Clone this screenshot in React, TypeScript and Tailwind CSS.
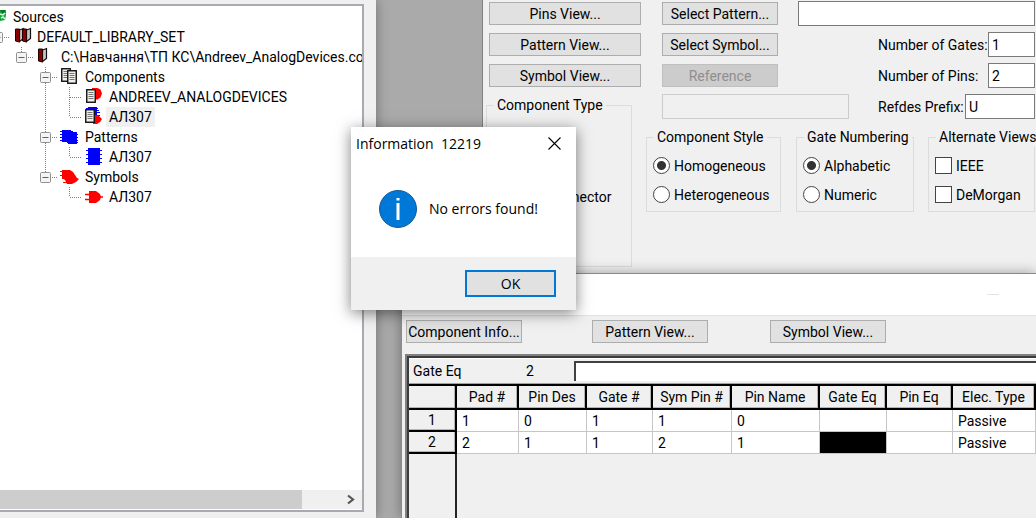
import React from "react";

type Guide = "none" | "line" | "tee" | "end" | "box" | "boxEnd";
type IconName = "sources" | "set" | "library" | "components" | "symbolPart" | "fullPart" | "patterns" | "pattern" | "symbols" | "symbol";

interface Node {
  label: string;
  icon: IconName;
  guides: Guide[];
  selected?: boolean;
}

const NODES: Node[] = [
  { label: "Sources", icon: "sources", guides: [] },
  { label: "DEFAULT_LIBRARY_SET", icon: "set", guides: ["boxEnd"] },
  { label: "C:\\Навчання\\ТП КС\\Andreev_AnalogDevices.co", icon: "library", guides: ["none", "boxEnd"] },
  { label: "Components", icon: "components", guides: ["none", "none", "box"] },
  { label: "ANDREEV_ANALOGDEVICES", icon: "symbolPart", guides: ["none", "none", "line", "tee"] },
  { label: "АЛ307", icon: "fullPart", guides: ["none", "none", "line", "end"], selected: true },
  { label: "Patterns", icon: "patterns", guides: ["none", "none", "box"] },
  { label: "АЛ307", icon: "pattern", guides: ["none", "none", "line", "end"] },
  { label: "Symbols", icon: "symbols", guides: ["none", "none", "boxEnd"] },
  { label: "АЛ307", icon: "symbol", guides: ["none", "none", "none", "end"] },
];

function GuideCell({ kind }: { kind: Guide }) {
  const boxed = kind === "box" || kind === "boxEnd";
  const through = kind === "box" || kind === "line" || kind === "tee";
  return (
    <svg width="24" height="20" viewBox="0 0 24 20" className="shrink-0" aria-hidden="true">
      {kind !== "none" && (
        <path d={through ? "M11.5 0V20" : "M11.5 0V10"} stroke="#808080" strokeDasharray="1 1" />
      )}
      {kind !== "none" && kind !== "line" && <path d="M12 10.5H25" stroke="#808080" strokeDasharray="1 1" />}
      {boxed && (
        <>
          <rect x="6.5" y="5.5" width="10" height="10" rx="1" fill="#f4f4f4" stroke="#919191" />
          <path d="M8.5 10.5H14.5" stroke="#4060b0" />
        </>
      )}
    </svg>
  );
}

const doc = (x: number, y: number) => (
  <g key={x}>
    <rect x={x + 0.75} y={y + 0.75} width="8.5" height="12.5" fill="#f0f0ec" stroke="#111" strokeWidth="1.4" />
    <path d={`M${x + 2.5} ${y + 3.5}h5M${x + 2.5} ${y + 5.5}h5M${x + 2.5} ${y + 7.5}h5M${x + 2.5} ${y + 9.5}h5`} stroke="#555" strokeWidth="0.8" />
  </g>
);

const book = (x: number, y: number) => (
  <g key={x}>
    <path d={`M${x + 4.5} ${y + 2}l4-1.500v10l-4 3z`} fill="#c4c4c4" stroke="#111" strokeWidth="1.2" />
    <path d={`M${x + 0.5} ${y + 1}h4v13l-4-1z`} fill="#8b0000" stroke="#200" strokeWidth="1" />
  </g>
);

function NodeIcon({ name }: { name: IconName }) {
  const art: Record<IconName, React.ReactNode> = {
    sources: (
      <>
        <path d="M8 3h12v5l-1 5-5 1-6-2z" fill="#12a53a" />
        <path d="M14 3h5v3h-3z" fill="#067a22" />
        <path d="M14 7l3 1 2-2M15 11l2-1 2 2" stroke="#d8ffe0" strokeWidth="1.500" fill="none" />
      </>
    ),
    set: <>{book(5, 1)}{book(12, 1)}</>,
    library: book(4, 1),
    components: <>{doc(3, 1)}{doc(9, 3)}</>,
    symbolPart: (
      <>
        <path d="M10 1h5.500l3 1.500 1.500 4-1.500 4-3 2H10z" fill="#f00" />
        {doc(4, 2)}
      </>
    ),
    fullPart: (
      <>
        <path d="M4 1.500h12M4 3.500h13M14 5.500h4M14 8.500h4" stroke="#00f" />
        <path d="M6 0h9v10H6z" fill="#00f" />
        <path d="M11 8h5l2 2 2 2-2 3-3 2h-4z" fill="#f00" />
        {doc(3, 2)}
      </>
    ),
    patterns: (
      <>
        <path d="M4 3h9v12H4zM10 5h9v12h-9z" fill="#00f" />
        <path d="M2 4.500h13M2 7.500h18M2 10.500h18M2 13.500h18M9 15.500h11" stroke="#00f" />
      </>
    ),
    pattern: (
      <>
        <path d="M6 1h12v17H6z" fill="#00f" />
        <path d="M4 3.500h16M4 7.500h16M4 11.500h16M4 15.500h16" stroke="#00f" strokeWidth="1.200" />
      </>
    ),
    symbols: (
      <>
        <path d="M4 3h8l3 2 2 3 2 3 2 1-3 3-4 2H9l-2-4-3-2z" fill="#f00" />
        <path d="M2 4.500h4M2 8.500h4M4 11.500h6M5 15.500h6" stroke="#f00" />
      </>
    ),
    symbol: (
      <>
        <path d="M7 4h7l4 3 1 3-1 3-4 3H7z" fill="#f00" />
        <path d="M3 7.500h5M3 12.500h5M17 10h4" stroke="#f00" strokeWidth="1.300" />
      </>
    ),
  };
  return (
    <svg width="24" height="20" viewBox="0 0 24 20" className="shrink-0" aria-hidden="true">
      {art[name]}
    </svg>
  );
}

function SourceTree() {
  return (
    <ul className="-ml-[14px] pt-px">
      {NODES.map((node, i) => (
        <li key={i} className="flex h-5 items-center whitespace-nowrap">
          {node.guides.map((g, j) => (
            <GuideCell key={j} kind={g} />
          ))}
          <NodeIcon name={node.icon} />
          <span className={node.selected ? "bg-[#f0f0f0] px-[3px] leading-5" : "pl-[3px] leading-5"}>{node.label}</span>
        </li>
      ))}
    </ul>
  );
}

function Button({ children, className = "", disabled }: { children: React.ReactNode; className?: string; disabled?: boolean }) {
  return (
    <button
      type="button"
      disabled={disabled}
      className={`h-[23px] whitespace-nowrap border border-[#adadad] bg-[#e1e1e1] leading-5 disabled:border-[#bfbfbf] disabled:bg-[#cccccc] disabled:text-[#8f8f8f] ${className}`}
    >
      {children}
    </button>
  );
}

function Field({ id, label, value, width }: { id: string; label: string; value: string; width: string }) {
  return (
    <>
      <label htmlFor={id} className="whitespace-nowrap leading-5">{label}</label>
      <input id={id} defaultValue={value} className={`ml-auto h-[25px] border border-[#7a7a7a] bg-white px-[3px] ${width}`} />
    </>
  );
}

function Choice({ type, name, label, checked }: { type: "radio" | "checkbox"; name: string; label: string; checked?: boolean }) {
  return (
    <label className="flex h-[29px] items-center gap-1">
      <input
        type={type}
        name={name}
        defaultChecked={checked}
        className={
          type === "radio"
            ? "size-[17px] shrink-0 appearance-none rounded-full border border-[#444] bg-white checked:bg-[radial-gradient(circle,#333_4px,#fff_5px)]"
            : "size-[17px] shrink-0 appearance-none border border-[#444] bg-white"
        }
      />
      {label}
    </label>
  );
}

function Group({ title, className = "", children }: { title: string; className?: string; children: React.ReactNode }) {
  return (
    <fieldset className={`min-w-0 border border-[#dcdcdc] px-[6px] ${className}`}>
      <legend className="ml-px whitespace-nowrap px-[3px] leading-5">{title}</legend>
      {children}
    </fieldset>
  );
}

function ComponentWindow() {
  return (
    <main className="flex min-w-0 flex-1 items-start border-l border-[#808080] bg-[#f0f0f0] pl-[3px] pr-px pt-px">
      <div className="w-[146px] shrink-0">
        <div className="ml-[3px] flex w-[152px] flex-col gap-2 pt-px">
          <Button>Pins View...</Button>
          <Button>Pattern View...</Button>
          <Button>Symbol View...</Button>
        </div>
        <Group title="Component Type" className="mt-2 h-[172px]">
          <div className="ml-[33px] mt-[67px]">
            <Choice type="radio" name="type" label="Connector" />
          </div>
        </Group>
      </div>
      <div className="ml-[14px] min-w-0 flex-1">
        <div className="ml-4 flex flex-col gap-[6px]">
          <div className="flex items-center justify-between">
            <Button className="w-[116px]">Select Pattern...</Button>
            <input aria-label="Component name" className="h-[25px] w-[237px] border border-[#7a7a7a] bg-white px-[3px]" />
          </div>
          <div className="flex items-center justify-between">
            <Button className="w-[116px]">Select Symbol...</Button>
            <div className="flex w-[157px] items-center">
              <Field id="gates" label="Number of Gates:" value="1" width="w-[47px]" />
            </div>
          </div>
          <div className="flex items-center justify-between">
            <Button className="w-[116px]" disabled>Reference</Button>
            <div className="flex w-[157px] items-center">
              <Field id="pins" label="Number of Pins:" value="2" width="w-[47px]" />
            </div>
          </div>
          <div className="flex items-center justify-between">
            <input aria-label="Reference name" disabled className="h-[25px] w-[187px] border border-[#cccccc] bg-[#f0f0f0]" />
            <div className="flex w-[157px] items-center">
              <Field id="prefix" label="Refdes Prefix:" value="U" width="w-[70px]" />
            </div>
          </div>
        </div>
        <div className="mt-2 flex">
          <Group title="Component Style" className="h-[85px] w-[135px]">
            <div className="pt-1">
              <Choice type="radio" name="style" label="Homogeneous" checked />
              <Choice type="radio" name="style" label="Heterogeneous" />
            </div>
          </Group>
          <Group title="Gate Numbering" className="ml-[15px] h-[85px] w-[118px]">
            <div className="pt-1">
              <Choice type="radio" name="numbering" label="Alphabetic" checked />
              <Choice type="radio" name="numbering" label="Numeric" />
            </div>
          </Group>
          <Group title="Alternate Views" className="ml-[14px] h-[85px] flex-1">
            <div className="pt-1">
              <Choice type="checkbox" name="ieee" label="IEEE" />
              <Choice type="checkbox" name="demorgan" label="DeMorgan" />
            </div>
          </Group>
        </div>
      </div>
    </main>
  );
}

const COLUMNS: [string, string][] = [
  ["Pad #", "w-[62px]"],
  ["Pin Des", "w-[68px]"],
  ["Gate #", "w-[66px]"],
  ["Sym Pin #", "w-[79px]"],
  ["Pin Name", "w-[88px]"],
  ["Gate Eq", "w-[67px]"],
  ["Pin Eq", "w-[66px]"],
  ["Elec. Type", "w-auto"],
];

const ROWS = [
  ["1", "0", "1", "1", "0", "", "", "Passive"],
  ["2", "1", "1", "2", "1", "", "", "Passive"],
];

function PinsWindow() {
  return (
    <section className="absolute bottom-0 left-[401px] right-0 top-[273px] flex flex-col overflow-hidden border-l border-t border-[#8a8a8a] bg-[#f0f0f0] shadow-[0_0_12px_rgba(0,0,0,0.35)]">
      <header className="flex h-[42px] shrink-0 items-center justify-end border-b border-[#e2e2e2] bg-white pr-[37px]">
        <button type="button" aria-label="Minimize" className="h-px w-3 bg-[#e4e4e4]" />
      </header>
      <div className="flex py-1 pl-1">
        <Button className="w-[116px]">Component Info...</Button>
        <Button className="ml-[70px] w-[116px]">Pattern View...</Button>
        <Button className="ml-[62px] w-[116px]">Symbol View...</Button>
      </div>
      <div className="ml-[3px] mt-[7px] flex flex-1 flex-col border-l-2 border-t-2 border-[#808080]">
        <div className="flex flex-1 flex-col border-l-2 border-t-2 border-[#3c3c3c]">
          <div className="flex h-[26px] items-center border-b border-t border-b-[#a0a0a0] border-t-white pl-1">
            <span className="w-[113px]">Gate Eq</span>
            <label htmlFor="cell" className="w-[48px]">2</label>
            <input id="cell" className="h-5 min-w-0 flex-1 border-l-2 border-t-2 border-[#404040] bg-white px-1" />
          </div>
          <table className="w-full table-fixed border-separate border-spacing-0 border-t-2 border-black">
            <thead>
              <tr className="h-6">
                <th aria-label="Row" className="w-12 border-b-2 border-r-2 border-black p-0 shadow-[inset_-1px_-1px_0_#b4b4b4]" />
                {COLUMNS.map(([name, width]) => (
                  <th key={name} className={`${width} whitespace-nowrap border-b-2 border-r-2 border-black p-0 text-center font-normal leading-5 shadow-[inset_-1px_-1px_0_#b4b4b4]`}>
                    {name}
                  </th>
                ))}
              </tr>
            </thead>
            <tbody>
              {ROWS.map((row, r) => (
                <tr key={r} className="h-[22px]">
                  <th className="border-b-2 border-r-2 border-black p-0 text-center font-normal leading-5 shadow-[inset_-1px_-1px_0_#b4b4b4]">{r + 1}</th>
                  {row.map((value, c) => (
                    <td
                      key={c}
                      className={`border-b border-r border-[#c6c6c6] py-0 pl-[5px] pr-0 leading-5 ${r === 1 && c === 5 ? "bg-black" : "bg-white"}`}
                    >
                      {value}
                    </td>
                  ))}
                </tr>
              ))}
            </tbody>
          </table>
          <div className="w-12 flex-1 border-r-2 border-[#222]" />
        </div>
      </div>
    </section>
  );
}

function InformationDialog() {
  return (
    <div
      role="dialog"
      aria-labelledby="dialog-title"
      className="absolute left-[351px] top-[127px] w-[225px] bg-white font-['Open_Sans',sans-serif] shadow-[0_3px_14px_rgba(0,0,0,0.5)]"
    >
      <div className="flex h-[33px] items-center justify-between pl-[5px] pr-[15px]">
        <h2 id="dialog-title" className="whitespace-pre text-sm">Information  12219</h2>
        <button type="button" aria-label="Close">
          <svg width="13" height="13" viewBox="0 0 13 13">
            <path d="M0.500 0.500l12 12M12.500 0.500l-12 12" stroke="#000" strokeWidth="1.100" />
          </svg>
        </button>
      </div>
      <div className="flex h-[97px] items-center gap-3 pl-7">
        <svg width="38" height="38" viewBox="0 0 38 38" aria-hidden="true">
          <circle cx="19" cy="19" r="18.500" fill="#0078d7" stroke="#15599b" />
          <rect x="17.500" y="8" width="3" height="2.500" fill="#fff" />
          <rect x="17.500" y="13" width="3" height="17" fill="#fff" />
        </svg>
        <p className="text-sm">No errors found!</p>
      </div>
      <div className="flex h-[53px] items-center justify-end bg-[#f0f0f0] pr-5">
        <button type="button" className="h-[27px] w-[91px] border-2 border-[#0078d7] bg-[#e1e1e1] text-sm leading-5">
          OK
        </button>
      </div>
    </div>
  );
}

export default function App() {
  return (
    <div className="relative flex h-screen overflow-hidden bg-[#aaaaaa] font-[Roboto,sans-serif] text-sm text-black">
      <aside className="mr-[106px] flex w-[376px] shrink-0 flex-col bg-[#f0f0f0] pb-[6px] pr-3 pt-1 shadow-[0_0_12px_rgba(0,0,0,0.35)]">
        <div className="flex flex-1 flex-col overflow-hidden border-y-2 border-r-2 border-[#a9a9b2] bg-white">
          <SourceTree />
          <div className="mb-px mt-auto flex h-[19px] items-center justify-between bg-[#f0f0f0] pr-[6px]">
            <div className="h-full w-[302px] bg-[#cdcdcd]" />
            <svg width="10" height="11" viewBox="0 0 10 11" aria-label="Scroll right">
              <path d="M2 1.500l5 4-5 4" fill="none" stroke="#555" strokeWidth="2.200" />
            </svg>
          </div>
        </div>
      </aside>
      <ComponentWindow />
      <PinsWindow />
      <InformationDialog />
    </div>
  );
}
